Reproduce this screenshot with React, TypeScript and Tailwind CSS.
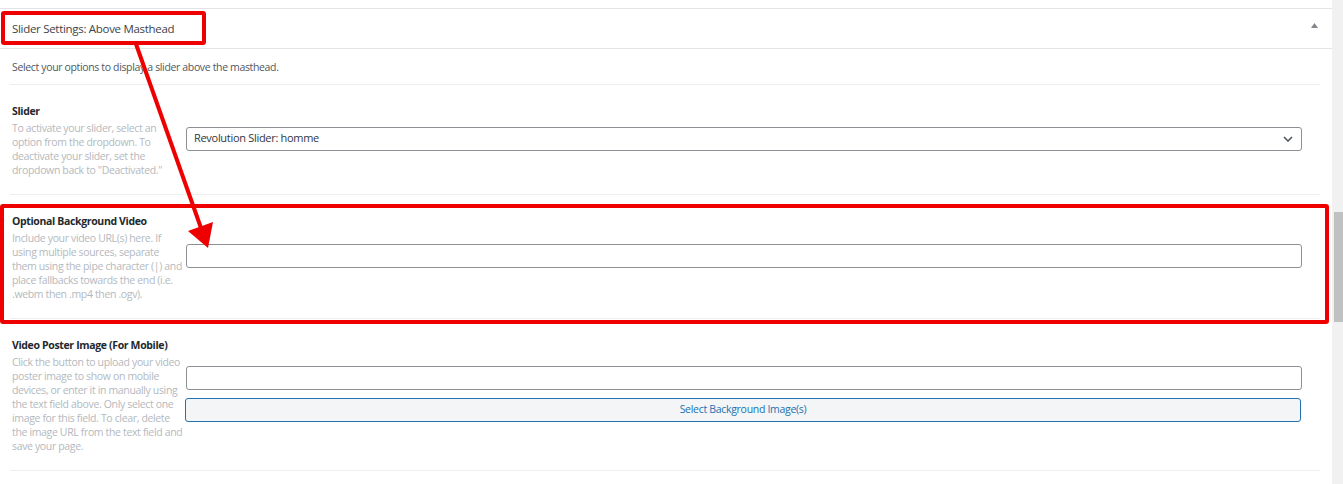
import React from "react";

const font = { fontFamily: '"Open Sans", "Noto Sans", Arial, sans-serif' };

function Desc({ lines }: { lines: string[] }) {
  return (
    <div className="mt-[3px] text-[10.5px] leading-[14px] tracking-[-0.35px] text-[#b4b9be]">
      {lines.map((l, i) => (
        <div key={i} className="whitespace-nowrap">
          {l}
        </div>
      ))}
    </div>
  );
}

function Row({
  label,
  lines,
  children,
}: {
  label: string;
  lines: string[];
  children: React.ReactNode;
}) {
  return (
    <div className="flex items-center border-b border-[#eeeeee] pb-[17px] pt-[19px]">
      <div className="w-[176px] shrink-0 self-start pl-[2px]">
        <div className="text-[10.5px] font-bold leading-[14px] tracking-[-0.35px] text-[#23282d]">{label}</div>
        <Desc lines={lines} />
      </div>
      <div className="flex flex-1 flex-col gap-[8px] pb-[4px] pr-[18px]">{children}</div>
    </div>
  );
}

function TextInput() {
  return <div className="h-[24px] rounded-[3px] border border-[#8c8f94] bg-white" />;
}

export default function App() {
  return (
    <div className="relative h-[484px] w-full overflow-hidden bg-white" style={font}>
      <div className="flex h-full">
        <div className="flex-1">
          <div className="h-[8px]" />
          {/* metabox header */}
          <div className="flex h-[41px] items-center justify-between border-y border-[#e2e4e7] pl-[12px] pr-[14px]">
            <span className="text-[11.5px] tracking-[-0.3px] text-[#3c434a]">Slider Settings: Above Masthead</span>
            <svg width="7" height="5" viewBox="0 0 7 5" className="mb-[6px]">
              <path d="M0 5 L3.5 0 L7 5 Z" fill="#82878c" />
            </svg>
          </div>
          <div className="ml-[10px] mr-[12px]">
            <div className="border-b border-[#eeeeee] pb-[10px] pl-[2px] pt-[11px] text-[10.5px] leading-[14px] tracking-[-0.35px] text-[#50575e]">
              Select your options to display a slider above the masthead.
            </div>

            <Row
              label="Slider"
              lines={[
                "To activate your slider, select an",
                "option from the dropdown. To",
                "deactivate your slider, set the",
                'dropdown back to "Deactivated."',
              ]}
            >
              <div className="flex h-[24px] items-center justify-between rounded-[3px] border border-[#8c8f94] bg-white pl-[7px] pr-[8px]">
                <span className="text-[11px] tracking-[-0.3px] text-[#32373c]">Revolution Slider: homme</span>
                <svg width="10" height="6" viewBox="0 0 10 6">
                  <path d="M1 1 L5 5 L9 1" fill="none" stroke="#50575e" strokeWidth="1.6" />
                </svg>
              </div>
            </Row>

            <Row
              label="Optional Background Video"
              lines={[
                "Include your video URL(s) here. If",
                "using multiple sources, separate",
                "them using the pipe character (|) and",
                "place fallbacks towards the end (i.e.",
                ".webm then .mp4 then .ogv).",
              ]}
            >
              <TextInput />
            </Row>

            <Row
              label="Video Poster Image (For Mobile)"
              lines={[
                "Click the button to upload your video",
                "poster image to show on mobile",
                "devices, or enter it in manually using",
                "the text field above. Only select one",
                "image for this field. To clear, delete",
                "the image URL from the text field and",
                "save your page.",
              ]}
            >
              <TextInput />
              <div className="-ml-[1px] mr-[1px] flex h-[24px] items-center justify-center rounded-[3px] border border-[#2271b1] bg-[#f3f5f6] text-[10.5px] tracking-[-0.3px] text-[#2271b1]">
                Select Background Image(s)
              </div>
            </Row>
          </div>
        </div>
        {/* scrollbar */}
        <div className="w-[11px] shrink-0 bg-[#f1f1f1] pl-[2px] pt-[212px]">
          <div className="h-[110px] bg-[#c1c1c1]" />
        </div>
      </div>

      {/* annotation overlay */}
      <div className="pointer-events-none absolute left-[1px] top-[11px] h-[34px] w-[205px] rounded-[3px] border-[4px] border-[#ee0000]" />
      <div className="pointer-events-none absolute left-0 top-[204px] h-[120px] w-[1329px] rounded-[3px] border-[4px] border-[#ee0000]" />
      <svg className="pointer-events-none absolute left-0 top-0" width="1343" height="484">
        <line x1="136" y1="44" x2="201" y2="228" stroke="#ee0000" strokeWidth="4" />
        <polygon points="208,248 188,231 213,222" fill="#ee0000" />
      </svg>
    </div>
  );
}
